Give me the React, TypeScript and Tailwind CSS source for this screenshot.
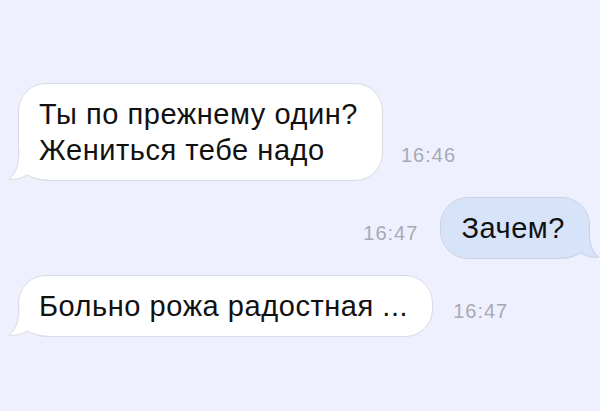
import React from 'react';

type Side = 'left' | 'right';

function Tail({ side, fill, stroke }: { side: Side; fill: string; stroke: string }) {
  return (
    <svg
      width="40"
      height="32"
      viewBox="0 0 40 32"
      className={
        side === 'left'
          ? 'absolute left-[-12px] bottom-[-1px]'
          : 'absolute right-[-12px] bottom-[-1px] -scale-x-100'
      }
    >
      <path d="M12 0 C12 14 10 24 2 30 C9 31 15 29 20 26 C26 29 32 31 40 31 L40 0 Z" fill={fill} />
      <path d="M12 0 C12 14 10 24 2 30 C9 31 15 29 20 26 C26 29 32 31 40 31" fill="none" stroke={stroke} strokeWidth="1" />
    </svg>
  );
}

function Bubble({ side, children }: { side: Side; children: React.ReactNode }) {
  const incoming = side === 'left';
  return (
    <div
      className={
        incoming
          ? 'relative rounded-[28px] border border-[#d9dbe3] bg-white py-3 pl-5 pr-6'
          : 'relative rounded-[28px] border border-[#c8d2e6] bg-[#d7e3f9] py-3 pl-5 pr-6'
      }
    >
      <Tail
        side={side}
        fill={incoming ? '#ffffff' : '#d7e3f9'}
        stroke={incoming ? '#d9dbe3' : '#c8d2e6'}
      />
      <div className="relative text-[29px] leading-[36px] tracking-[0.55px] text-[#111111]">{children}</div>
    </div>
  );
}

function Time({ children }: { children: React.ReactNode }) {
  return (
    <span className="pb-[16px] text-[20px] leading-none tracking-[1px] text-[#a7aab4]">{children}</span>
  );
}

export default function App() {
  return (
    <div
      className="flex h-[411px] w-[600px] flex-col gap-4 bg-[#eef0fe] pt-[83px]"
      style={{ fontFamily: '"Liberation Sans", Arial, sans-serif' }}
    >
      <div className="flex items-end gap-[18px] pl-[18px]">
        <Bubble side="left">
          Ты по прежнему один?
          <br />
          Жениться тебе надо
        </Bubble>
        <Time>16:46</Time>
      </div>

      <div className="flex items-end justify-end gap-[22px] pr-[10px]">
        <Time>16:47</Time>
        <Bubble side="right">Зачем?</Bubble>
      </div>

      <div className="flex items-end gap-5 pl-[18px]">
        <Bubble side="left">Больно рожа радостная ...</Bubble>
        <Time>16:47</Time>
      </div>
    </div>
  );
}
